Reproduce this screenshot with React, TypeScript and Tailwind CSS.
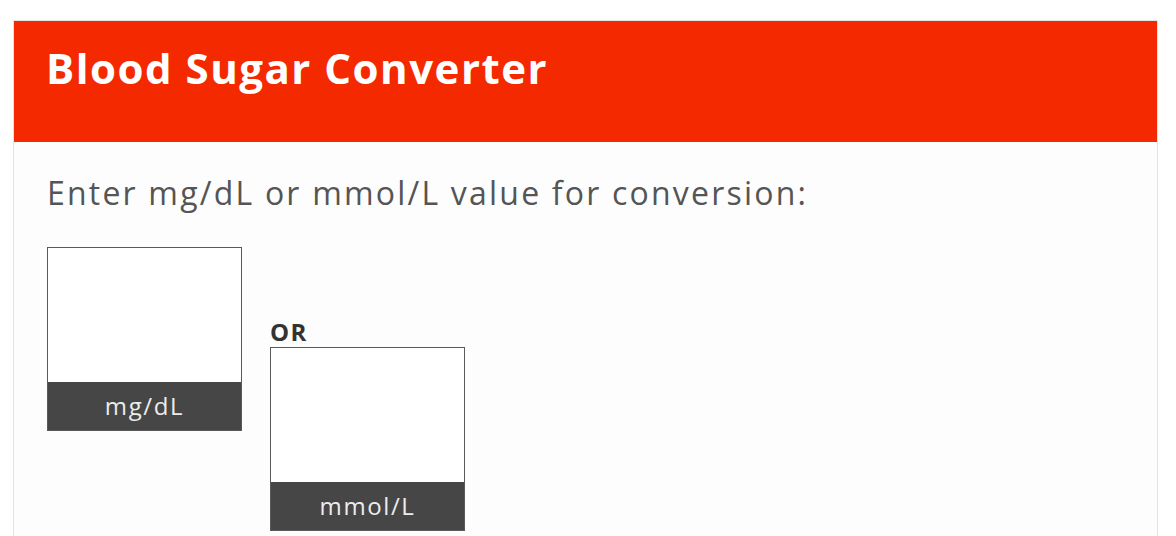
import React, { useState } from "react"

interface UnitBoxProps {
  unit: string
  value: string
  onChange: (value: string) => void
}

// One input with its unit band underneath
const UnitBox: React.FC<UnitBoxProps> = ({ unit, value, onChange }) => (
  <div className="flex w-[195px] flex-col border border-[#5a5a5a]">
    <input
      type="text"
      value={value}
      onChange={(e) => onChange(e.target.value)}
      className="h-[134px] w-full bg-white px-3 text-[24px] text-[#333] outline-none"
    />
    <div className="h-[48px] bg-[#464646] text-center text-[24px] leading-[48px] tracking-[1.6px] text-[#ececec]">
      {unit}
    </div>
  </div>
)

const App: React.FC = () => {
  const [mgdl, setMgdl] = useState("")
  const [mmol, setMmol] = useState("")

  const handleMgdl = (value: string) => {
    setMgdl(value)
    const n = parseFloat(value)
    setMmol(isNaN(n) ? "" : (n / 18).toFixed(1))
  }

  const handleMmol = (value: string) => {
    setMmol(value)
    const n = parseFloat(value)
    setMgdl(isNaN(n) ? "" : Math.round(n * 18).toString())
  }

  return (
    <div
      className="min-h-screen bg-white pl-[13px] pr-[18px] pt-[20px]"
      style={{ fontFamily: '"Open Sans", "Liberation Sans", sans-serif' }}
    >
      <div className="h-[560px] border border-[#e4e4e4] bg-[#fdfdfd]">
        <div className="h-[121px] bg-[#f52900] pl-[32px] pt-[20px]">
          <h1 className="text-[42px] font-bold leading-[54px] tracking-[1.5px] text-white">
            Blood Sugar Converter
          </h1>
        </div>

        <div className="px-[33px] pt-[31px]">
          <p className="text-[32px] leading-[40px] tracking-[2.2px] text-[#555]">
            Enter mg/dL or mmol/L value for conversion:
          </p>

          <div className="mt-[34px] flex items-start gap-[28px]">
            <UnitBox unit="mg/dL" value={mgdl} onChange={handleMgdl} />
            <div className="mt-[70px] flex flex-col items-start">
              <span className="text-[24px] font-bold leading-[30px] tracking-[1.5px] text-[#333]">
                OR
              </span>
              <UnitBox unit="mmol/L" value={mmol} onChange={handleMmol} />
            </div>
          </div>
        </div>
      </div>
    </div>
  )
}

export default App
